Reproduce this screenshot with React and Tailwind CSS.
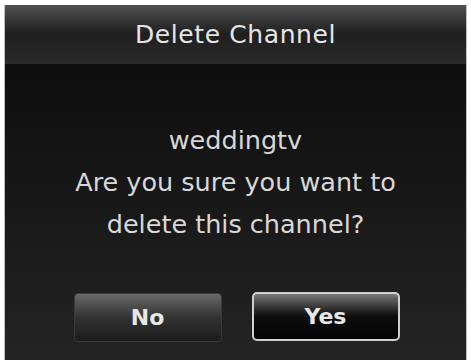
export default function App() {
  return (
    <div className="w-[471px] h-[362px] bg-white pt-[5px] pl-[4px]">
      <div
        className="w-[463px] h-[355px] flex flex-col bg-gradient-to-b from-[#0a0a0a] to-[#242424] border-l border-r border-[#bdbdbd]"
        style={{ fontFamily: '"DejaVu Sans", sans-serif' }}
      >
        <div className="h-[60px] flex items-center justify-center bg-gradient-to-b from-[#505050] via-[#1f1f1f] to-[#2b2b2b] border-b border-[#111]">
          <span className="text-[25px] text-[#e6e6e6] tracking-[0.6px]">Delete Channel</span>
        </div>
        <div className="flex flex-col items-center pt-[54px] text-[25.5px] leading-[42px] text-[#d8d8d8]">
          <div>weddingtv</div>
          <div>Are you sure you want to</div>
          <div>delete this channel?</div>
        </div>
        <div className="flex justify-center gap-[30px] mt-[48px] pl-[2px]">
          <button className="w-[148px] h-[49px] rounded-[4px] bg-gradient-to-b from-[#6a6a6a] via-[#333] to-[#1c1c1c] border border-[#3a3a3a] text-[22px] font-bold text-[#e8e8e8]">
            No
          </button>
          <button className="w-[148px] h-[49px] -mt-[1px] rounded-[5px] bg-gradient-to-b from-[#7a7a7a] via-[#0d0d0d] to-[#050505] border-2 border-[#cfcfcf] text-[22px] font-bold text-[#e8e8e8]">
            Yes
          </button>
        </div>
      </div>
    </div>
  );
}
